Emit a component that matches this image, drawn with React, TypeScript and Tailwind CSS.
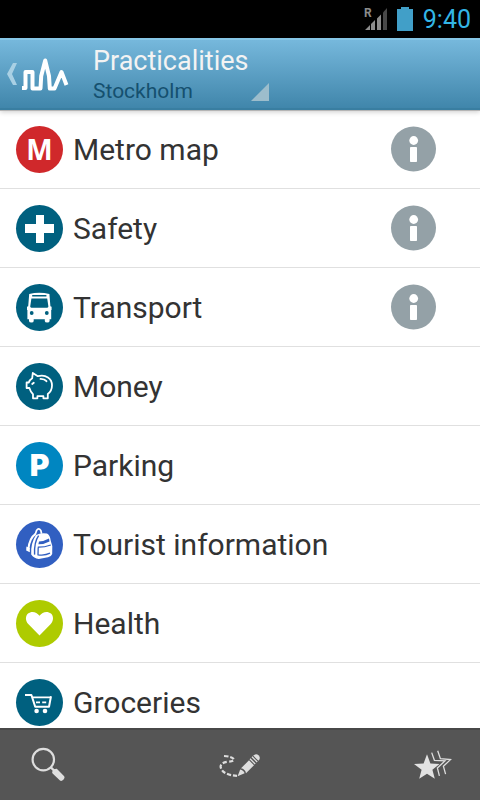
import React from "react";

interface Practicality {
  id: string;
  title: string;
  color: string;
  icon: React.ReactNode;
  hasInfo?: boolean;
}

const BusIcon = () => (
  <svg viewBox="0 0 47 47" className="h-full w-full" aria-hidden="true">
    <path
      fill="#fff"
      d="M13.2 9.9Q23.3 7.6 33.4 9.9L34.4 22.3 35.6 22.8V26H35.2V35.2H33.6V37Q33.6 38.6 31.2 38.6T28.8 37V35.2H17.7V37Q17.7 38.6 15.4 38.6T13 37V35.2H11.4V26H11V22.8L12.2 22.3Z"
    />
    <path
      fill="#00607f"
      d="M16.2 10.9H30.4V12.5H16.2ZM15.4 14.5H31.2L32.4 22.6Q32.4 23.7 31.2 23.8H15.4Q14.2 23.7 14.2 22.6Z"
    />
    <circle cx="15.7" cy="29" r="1.9" fill="#00607f" />
    <circle cx="30.8" cy="29" r="1.9" fill="#00607f" />
  </svg>
);

const PiggyIcon = () => (
  <svg
    viewBox="0 0 47 47"
    className="h-full w-full"
    fill="none"
    stroke="#fff"
    strokeWidth="1.8"
    strokeLinejoin="round"
    strokeLinecap="round"
    aria-hidden="true"
  >
    <path d="M16.8 10L21.8 13.2C30 11.2 36 15.5 36 22.3C36 26.5 34.2 29.3 31.8 31V35.3H27.4V33.2H21.4V35.3H17V31.2C15.4 30 14.2 27.5 13.4 25H10.6V19.5H12.8C13.3 17.7 14.6 16.2 16.2 15.2Z" />
    <path d="M24.5 15.9Q28.5 15.8 30.5 18.2" />
    <path d="M16.2 21L17.8 19.7" />
  </svg>
);

const BackpackIcon = () => (
  <svg viewBox="0 0 47 47" className="h-full w-full" fill="none" aria-hidden="true">
    <path
      d="M19.3 13.2L20.6 9.4Q22.6 6.2 24.8 9.4L25.6 12.8"
      stroke="#fff"
      strokeWidth="1.7"
    />
    <path d="M19.6 12.8Q13.4 17 12.4 28" stroke="#fff" strokeWidth="2" />
    <path fill="#fff" d="M10.4 25.6L13.8 27V31.2L10.2 29.4Z" />
    <path
      fill="#fff"
      d="M20 14Q25 11.4 31 12.6Q34 14 34.8 20L36.3 25 36.2 33Q35.5 35.5 32 36.2L22.8 38Q17.8 37.3 15.2 33.4Q14.6 22 20 14Z"
    />
    <path
      d="M22.6 14.6Q18 21 18.6 33.6"
      stroke="#315fc1"
      strokeWidth="1.4"
    />
    <path fill="#315fc1" d="M23 20.6Q28 20.4 33 17.6L33.5 20.4Q28.5 23.2 22.4 23.2Z" />
    <path
      d="M21.8 26.2Q28 26.4 34.8 24M22.2 26.4L22 33.8Q29 34.8 34 32.2"
      stroke="#315fc1"
      strokeWidth="1.3"
    />
  </svg>
);

const CartIcon = () => (
  <svg viewBox="0 0 47 47" className="h-full w-full" fill="none" aria-hidden="true">
    <path
      d="M9 16H15.4L19.2 27.8H33L35 17.2"
      stroke="#fff"
      strokeWidth="2"
      strokeLinejoin="round"
    />
    <path
      d="M16.4 18.3H34.8M20 23.4H24M26.2 23.4H30.2"
      stroke="#fff"
      strokeWidth="1.8"
    />
    <circle cx="20.6" cy="32" r="2.3" fill="#fff" />
    <circle cx="29" cy="32" r="2.3" fill="#fff" />
  </svg>
);

const items: Practicality[] = [
  {
    id: "metro",
    title: "Metro map",
    color: "bg-[#d0282b]",
    icon: (
      <span className="font-['Open_Sans',sans-serif] text-[28px] font-bold">M</span>
    ),
    hasInfo: true,
  },
  {
    id: "safety",
    title: "Safety",
    color: "bg-[#00607f]",
    icon: (
      <svg viewBox="0 0 47 47" className="h-full w-full" aria-hidden="true">
        <path fill="#fff" d="M20 10H28V19H38V28H28V38H20V28H9V19H20Z" />
      </svg>
    ),
    hasInfo: true,
  },
  {
    id: "transport",
    title: "Transport",
    color: "bg-[#00607f]",
    icon: <BusIcon />,
    hasInfo: true,
  },
  { id: "money", title: "Money", color: "bg-[#00607f]", icon: <PiggyIcon /> },
  {
    id: "parking",
    title: "Parking",
    color: "bg-[#0086c1]",
    icon: <span className="font-[Inter,sans-serif] text-[30px] font-black">P</span>,
  },
  {
    id: "tourist",
    title: "Tourist information",
    color: "bg-[#315fc1]",
    icon: <BackpackIcon />,
  },
  {
    id: "health",
    title: "Health",
    color: "bg-[#aecb00]",
    icon: (
      <svg viewBox="0 0 47 47" className="h-full w-full" aria-hidden="true">
        <path
          fill="#fff"
          d="M23.5 35.4L12.5 24.3C9.2 21 9.2 16.2 12 13.6C15.3 10.8 20.5 11.5 23.5 15.8C26.5 11.5 31.7 10.8 35 13.6C37.8 16.2 37.8 21 34.5 24.3Z"
        />
      </svg>
    ),
  },
  { id: "groceries", title: "Groceries", color: "bg-[#00607f]", icon: <CartIcon /> },
];

const StatusBar = () => (
  <div className="flex h-[38px] shrink-0 items-center justify-end bg-black pr-[9px]">
    <svg width="24" height="24" viewBox="0 0 24 24" className="mr-[9px]" aria-hidden="true">
      <path fill="#8c8c8c" d="M1 23L6 18V23ZM7 17L11 13V23H7ZM13 11.5L17 7.5V23H13Z" />
      <path fill="#484848" d="M19 5.5L23 1V23H19Z" />
      <text
        x="0"
        y="10"
        fill="#8c8c8c"
        fontSize="12"
        fontWeight="700"
        fontFamily="Roboto, sans-serif"
      >
        R
      </text>
    </svg>
    <svg width="16" height="24" viewBox="0 0 16 24" className="mr-[10px]" aria-hidden="true">
      <path fill="#419fc8" d="M4 0H12V2H16V24H0V2H4Z" />
    </svg>
    <span className="text-[25px] leading-none text-[#33b5e5]">9:40</span>
  </div>
);

const Header = () => (
  <header className="z-10 flex h-[72px] shrink-0 items-center border-t-2 border-b-2 border-t-[#86c6e6] border-b-[#397ea1] bg-linear-to-b from-[#76b8dc] to-[#4086ab] shadow-[0_1px_0_#b5b5b5,0_2px_5px_rgba(0,0,0,0.2)]">
    <button type="button" aria-label="Back" className="flex items-center pl-[6px]">
      <svg width="12" height="24" viewBox="0 0 12 24" aria-hidden="true">
        <path fill="#a9d0e4" d="M7 1H11L6 12 11 23H7L1 12Z" />
      </svg>
      <svg width="48" height="34" viewBox="0 0 48 34" className="ml-[3px]" fill="none" aria-hidden="true">
        <path
          d="M1 31H4.5V15H11.5V31.5H19.5L20.2 19 24.2 3.5 28 19 28.8 31.5H33.5L40.5 15 45.5 28"
          stroke="#fff"
          strokeWidth="4"
          strokeLinejoin="round"
        />
      </svg>
    </button>
    <button type="button" className="ml-6 flex items-end pt-0.5 text-left">
      <span className="flex w-[158px] flex-col">
        <span className="text-[27px] leading-8 whitespace-nowrap text-[#f3f3f3]">
          Practicalities
        </span>
        <span className="text-[21px] leading-7 text-[#15506f]">Stockholm</span>
      </span>
      <svg width="18" height="18" viewBox="0 0 18 18" className="mb-1" aria-hidden="true">
        <path fill="#9cbdcc" d="M18 0V18H0Z" />
      </svg>
    </button>
  </header>
);

const InfoButton = ({ title }: { title: string }) => (
  <button type="button" aria-label={`About ${title}`} className="mr-11">
    <svg width="45" height="46" viewBox="0 0 45 46" className="block" aria-hidden="true">
      <circle cx="22.5" cy="23" r="22.5" fill="#94a1a7" />
      <circle cx="22.7" cy="14.5" r="4.4" fill="#fff" />
      <rect x="19" y="21" width="7" height="15" rx="0.8" fill="#fff" />
    </svg>
  </button>
);

const Toolbar = () => (
  <nav className="flex h-[72px] shrink-0 items-center justify-between border-t-2 border-[#484848] bg-[#555] pr-7 pl-[30px]">
    <button type="button" aria-label="Search">
      <svg width="36" height="36" viewBox="0 0 36 36" className="block" aria-hidden="true">
        <circle cx="13.3" cy="12.6" r="10.7" fill="none" stroke="#dedede" strokeWidth="2.2" />
        <path d="M20.5 20L25 24.5" stroke="#dedede" strokeWidth="2.4" />
        <path
          fill="#dedede"
          d="M22.4 24.2Q23.5 21.6 26.8 21.8L34.2 29.3Q35.2 30.8 33.6 32.6Q31.6 34.6 30 33.6L22.6 26.6Q21.8 25.4 22.4 24.2Z"
        />
      </svg>
    </button>
    <button type="button" aria-label="Plan a route">
      <svg width="44" height="36" viewBox="0 0 44 36" className="block" aria-hidden="true">
        <path
          d="M7 9Q15 9.3 17 12.5Q16.5 14.5 10.5 14.8Q3.5 15.8 3.6 19.8Q5 27.8 20 28.9"
          fill="none"
          stroke="#dedede"
          strokeWidth="2.2"
          strokeDasharray="4.2 2"
        />
        <path fill="#dedede" d="M20.6 29.3L23.2 22.5Q26.4 22.9 27.6 26.3Z" />
        <path fill="#dedede" d="M24 21.3L32 13.3 37 18.3 29 26.3Q28.2 22.1 24 21.3Z" />
        <path
          d="M33 11.8L38.2 17M35 9.8L40.2 15"
          stroke="#dedede"
          strokeWidth="1.3"
        />
        <path fill="#dedede" d="M36.2 8.6Q39 5.8 41.8 8.4Q44 11.2 41.4 13.8Z" />
      </svg>
    </button>
    <button type="button" aria-label="Favourites">
      <svg width="40" height="36" viewBox="0 0 40 36" className="block" aria-hidden="true">
        <path
          fill="#e2e2e2"
          d="M15 7.3L18.4 16.5 27.5 16.9 20.4 22.7 22.8 31.7 15 26.7 7.2 31.7 9.6 22.7 2 16.9 11.6 16.5Z"
        />
        <path
          d="M19.7 5.6L22.4 13.3 33 13.9 25.4 20.9 27.4 28.8M25.7 3.8L28.4 11.7 38.5 12.6 31.4 19.3 33.6 27.1"
          fill="none"
          stroke="#dedede"
          strokeWidth="1.3"
        />
      </svg>
    </button>
  </nav>
);

const App: React.FC = () => {
  return (
    <div className="flex h-screen flex-col bg-white font-[Roboto,sans-serif]">
      <StatusBar />
      <Header />
      <main className="min-h-0 flex-1 overflow-y-auto [scrollbar-width:none]">
        <ul>
          {items.map((item) => (
            <li
              key={item.id}
              className="flex h-[79px] items-center border-b border-[#e0e0e0]"
            >
              <a href={`#${item.id}`} className="flex flex-1 items-center pl-4">
                <span
                  className={`flex size-[47px] shrink-0 items-center justify-center rounded-full leading-none text-white ${item.color}`}
                >
                  {item.icon}
                </span>
                <span className="ml-[10px] pt-0.5 text-[30px] leading-9 text-[#333]">
                  {item.title}
                </span>
              </a>
              {item.hasInfo && <InfoButton title={item.title} />}
            </li>
          ))}
        </ul>
      </main>
      <Toolbar />
    </div>
  );
};

export default App;
